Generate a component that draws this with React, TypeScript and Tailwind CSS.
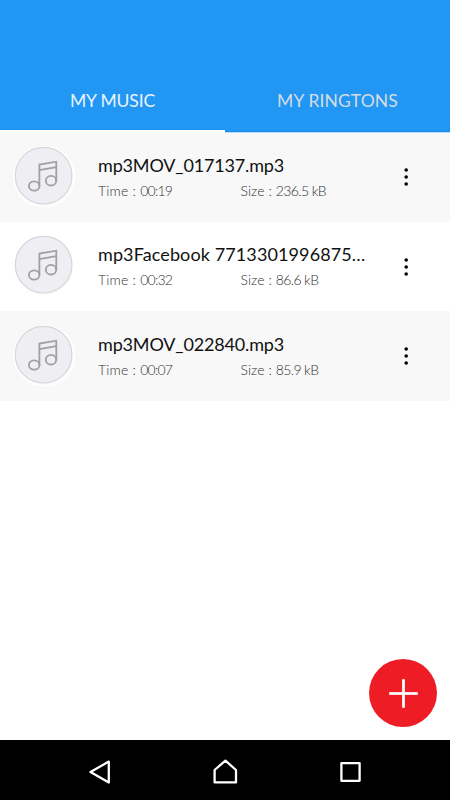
import { Plus } from 'lucide-react'

interface Track {
    title: string
    titleClass: string
    time: string
    size: string
}

const tracks: Track[] = [
    {
        title: 'mp3MOV_017137.mp3',
        titleClass: 'tracking-[-0.16px]',
        time: '00:19',
        size: '236.5 kB',
    },
    {
        title: 'mp3Facebook 7713301996875…',
        titleClass: 'tracking-[0.11px]',
        time: '00:32',
        size: '86.6 kB',
    },
    {
        title: 'mp3MOV_022840.mp3',
        titleClass: 'tracking-[-0.16px]',
        time: '00:07',
        size: '85.9 kB',
    },
]

function MusicAvatar() {
    return (
        <svg width="64" height="66" viewBox="0 0 64 66" fill="none">
            <circle cx="32.2" cy="33.8" r="30" fill="#fafafa" stroke="#fff" strokeWidth="1.6" />
            <circle cx="31.6" cy="32.7" r="28.3" fill="#efeef3" stroke="#d6d6da" strokeWidth="1.1" />
            <g stroke="#a0a0a1" strokeWidth="1.8">
                <ellipse cx="22.2" cy="43" rx="5.3" ry="4.7" />
                <ellipse cx="39" cy="37.7" rx="5.2" ry="4.8" />
                <path d="M27.4 43.2V21.6L44.3 18.7V37.9M27.4 27.2L44.3 24.2" />
            </g>
        </svg>
    )
}

function TrackRow({ track }: { track: Track }) {
    return (
        <li className="flex h-[89.5px] odd:bg-[#f8f8f8]">
            <div className="w-[98px] shrink-0 pt-[10.6px] pl-3">
                <MusicAvatar />
            </div>
            <div className="w-[290px] shrink-0 pt-[20.6px]">
                <p className={`text-[18px] leading-6 whitespace-nowrap text-[#111] ${track.titleClass}`}>
                    {track.title}
                </p>
                <div className="mt-1 flex text-[14px] leading-5 font-light whitespace-nowrap text-[#333]">
                    <p className="w-[142.5px]">
                        <span className="tracking-[0.2px]">Time : </span>
                        <span className="tracking-[-0.75px]">{track.time}</span>
                    </p>
                    <p>
                        <span className="tracking-[0.05px]">Size : </span>
                        <span className="tracking-[-0.6px]">{track.size}</span>
                    </p>
                </div>
            </div>
            <button className="flex w-9 justify-center pt-[35px]" aria-label="More options">
                <svg width="6" height="20" viewBox="0 0 6 20" fill="#000">
                    <circle cx="3.2" cy="3" r="1.8" />
                    <circle cx="3.2" cy="10" r="1.8" />
                    <circle cx="3.2" cy="17" r="1.8" />
                </svg>
            </button>
        </li>
    )
}

export default function App() {
    return (
        <div className="flex h-[800px] w-[450px] flex-col overflow-hidden bg-white font-['Lato','Liberation_Sans',sans-serif]">
            {/* Header with the two tabs, its bottom edge laps over the list by a pixel */}
            <header className="z-10 -mb-px flex h-[133px] shrink-0 items-end bg-[#2196f3]">
                <button className="flex h-[63px] flex-1 justify-center border-b-3 border-white pt-[19px] text-[17.5px] leading-6 tracking-[-0.15px] text-white/90 shadow-[inset_0_-1px_#1a8bec]">
                    MY MUSIC
                </button>
                <button className="flex h-[63px] flex-1 justify-center border-b border-[#b9dcf9] pt-[19px] text-[17.5px] leading-6 tracking-[0.12px] text-[#d3dce5] shadow-[inset_0_-1px_#1a8bec]">
                    MY RINGTONS
                </button>
            </header>

            <main className="flex flex-1 flex-col">
                <ul>
                    {tracks.map((track) => (
                        <TrackRow key={track.title} track={track} />
                    ))}
                </ul>
                <button
                    className="mt-auto mr-[13px] mb-[13px] flex size-[68px] items-center justify-center self-end rounded-full bg-[#ee1c25] text-white"
                    aria-label="Add"
                >
                    <Plus size={49} strokeWidth={1.35} strokeLinecap="butt" />
                </button>
            </main>

            {/* System navigation */}
            <nav className="flex h-[60px] shrink-0 items-center bg-black">
                <svg width="450" height="60" fill="none" stroke="#fff" strokeWidth="2.3" strokeLinejoin="round">
                    <path d="M108.8 21.6V42.6L90.5 32.1Z" />
                    <path d="M225.4 20.6L236 30V42.4H214.6V30Z" />
                    <path d="M341.4 23.1H359.6V40.8H341.4Z" />
                </svg>
            </nav>
        </div>
    )
}
